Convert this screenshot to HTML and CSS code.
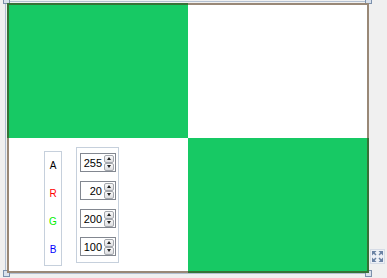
FILE: index.html
```html
<!DOCTYPE html>
<html lang="en">
  <head>
    <meta charset="UTF-8" />
    <title>Color board</title>
    <link rel="stylesheet" href="styles.css">
  </head>
  <body>
    <div id="stage">
      <div id="selection">
        <span class="handle tl"></span>
        <span class="handle tr"></span>
        <span class="handle bl"></span>
        <span class="handle br"></span>
      </div>
      <div id="board">
        <div class="cell"></div>
        <div class="cell"></div>
        <div class="cell picker">
          <div class="labels">
            <span class="lbl a">A</span>
            <span class="lbl r">R</span>
            <span class="lbl g">G</span>
            <span class="lbl b">B</span>
          </div>
          <div class="values">
            <div class="spin"><span class="val">255</span><span class="arrows"><i class="up"></i><i class="down"></i></span></div>
            <div class="spin"><span class="val">20</span><span class="arrows"><i class="up"></i><i class="down"></i></span></div>
            <div class="spin"><span class="val">200</span><span class="arrows"><i class="up"></i><i class="down"></i></span></div>
            <div class="spin"><span class="val">100</span><span class="arrows"><i class="up"></i><i class="down"></i></span></div>
          </div>
        </div>
        <div class="cell"></div>
      </div>
      <div id="resize">
        <svg width="13" height="13" viewBox="0 0 13 13">
          <path d="M2 2 L5 5 M11 2 L8 5 M2 11 L5 8 M11 11 L8 8" stroke="#6a82a4" stroke-width="1.5" fill="none" />
          <path d="M1 1 H5.5 L1 5.5 Z M12 1 V5.5 L7.5 1 Z M1 12 V7.5 L5.5 12 Z M12 12 H7.5 L12 7.5 Z" fill="#6a82a4" />
        </svg>
      </div>
    </div>
  </body>
</html>
```
FILE: styles.css
```css
body {
  margin: 0;
  background: #f0f0f0;
  font-family: "Liberation Sans", Arial, sans-serif;
  height: 278px;
  overflow: hidden;
}
#stage {
  position: relative;
  padding: 3px 0 0 7px;
}
#selection {
  position: absolute;
  left: 5px;
  top: 1px;
  width: 364px;
  height: 273px;
  border: 1px solid #b3c0d1;
  box-sizing: border-box;
}
.handle {
  position: absolute;
  width: 5px;
  height: 5px;
  background: #d9e1ec;
  border: 1px solid #7c91ad;
}
.handle.tl {
  left: -3px;
  top: -5px;
}
.handle.tr {
  right: -4px;
  top: -5px;
}
.handle.bl {
  left: -3px;
  bottom: -4px;
}
.handle.br {
  right: -4px;
  bottom: -4px;
}
#board {
  position: relative;
  width: 362px;
  height: 270px;
  box-sizing: border-box;
  border: 2px solid rgba(80, 50, 20, 0.58);
  background: conic-gradient(from 0deg at 50% 50%, #fff 0 25%, #17c964 0 50%, #fff 0 75%, #17c964 0);
  background-origin: border-box;
  display: grid;
  grid-template-columns: 1fr 1fr;
  grid-template-rows: 1fr 1fr;
}
.picker {
  display: flex;
  align-items: flex-start;
  padding: 9px 0 0 35px;
}
.labels {
  margin-top: 4px;
  width: 18px;
  box-sizing: border-box;
  border: 1px solid #c6d0dc;
  display: flex;
  flex-direction: column;
  padding-bottom: 1px;
}
.lbl {
  height: 28px;
  line-height: 28px;
  text-align: center;
  font-size: 10px;
}
.lbl.a { color: #000; }
.lbl.r { color: #ff0000; }
.lbl.g { color: #00f000; }
.lbl.b { color: #0000ff; }
.values {
  margin-left: 14px;
  width: 43px;
  box-sizing: border-box;
  border: 1px solid #c6d0dc;
  padding: 5px 2px 6px 3px;
  display: flex;
  flex-direction: column;
  gap: 9px;
}
.spin {
  height: 19px;
  width: 36px;
  box-sizing: border-box;
  border: 1px solid #828790;
  background: #fff;
  display: flex;
  align-items: center;
}
.val {
  flex: 1;
  text-align: right;
  font-size: 11px;
  padding-right: 2px;
}
.arrows {
  display: flex;
  flex-direction: column;
  width: 10px;
  margin-right: 1px;
}
.arrows i {
  height: 8px;
  box-sizing: border-box;
  border: 1px solid #a3a7ad;
  border-radius: 2px;
  background: linear-gradient(#fafafa, #dcdde0);
  display: flex;
  justify-content: center;
  align-items: center;
}
.arrows i::after {
  content: "";
  border-left: 2.5px solid transparent;
  border-right: 2.5px solid transparent;
}
.arrows .up::after {
  border-bottom: 3px solid #222;
}
.arrows .down::after {
  border-top: 3px solid #222;
}
#resize {
  position: absolute;
  left: 370px;
  top: 249px;
  width: 15px;
  height: 15px;
  box-sizing: border-box;
  background: #edf0f6;
  border: 1px solid #d6dce6;
  display: flex;
  justify-content: center;
  align-items: center;
}
```
